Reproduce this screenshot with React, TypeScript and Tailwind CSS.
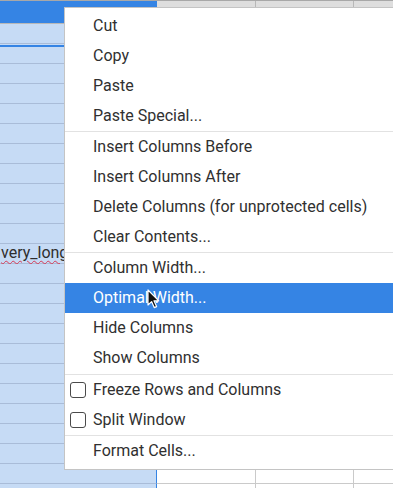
import React from 'react'

const rows = Array.from({ length: 24 }, (_, i) => i + 1)

type Entry =
    | { kind: 'item'; label: string; active?: boolean; check?: boolean }
    | { kind: 'sep'; gap?: boolean }

const menu: Entry[] = [
    { kind: 'item', label: 'Cut' },
    { kind: 'item', label: 'Copy' },
    { kind: 'item', label: 'Paste' },
    { kind: 'item', label: 'Paste Special...' },
    { kind: 'sep' },
    { kind: 'item', label: 'Insert Columns Before' },
    { kind: 'item', label: 'Insert Columns After' },
    { kind: 'item', label: 'Delete Columns (for unprotected cells)' },
    { kind: 'item', label: 'Clear Contents...' },
    { kind: 'sep' },
    { kind: 'item', label: 'Column Width...' },
    { kind: 'item', label: 'Optimal Width...', active: true },
    { kind: 'item', label: 'Hide Columns' },
    { kind: 'item', label: 'Show Columns' },
    { kind: 'sep', gap: true },
    { kind: 'item', label: 'Freeze Rows and Columns', check: true },
    { kind: 'item', label: 'Split Window', check: true },
    { kind: 'sep' },
    { kind: 'item', label: 'Format Cells...' },
]

const Pointer = () => (
    <svg width="14" height="21" viewBox="0 0 14 21" className="absolute left-[147px] top-[289px]">
        <path d="M1 1 L1 16 L4.6 12.6 L7.2 18.6 L9.6 17.6 L7 11.8 L11.8 11.8 Z" fill="#111" stroke="#fff" strokeWidth="1.2" strokeLinejoin="round" />
    </svg>
)

const App: React.FC = () => {
    return (
        <div className="relative w-[393px] h-[488px] overflow-hidden bg-white font-['Roboto',sans-serif]">
            {/* column header */}
            <div className="flex h-[24px] border-t border-b border-t-[#a8a8a8] border-b-[#b8b8b8] text-[13px] leading-[14px] text-[#2e2e2e]">
                <div className="w-[157px] shrink-0 bg-[#3584e4] text-white flex justify-center pt-[4px] border-r border-[#3584e4]">A</div>
                <div className="w-[99px] shrink-0 bg-[#dedede] flex justify-center pt-[4px] border-r border-[#b8b8b8]">B</div>
                <div className="w-[98px] shrink-0 bg-[#dedede] flex justify-center pt-[4px] border-r border-[#b8b8b8]">C</div>
                <div className="w-[99px] shrink-0 bg-[#dedede]" />
            </div>

            {/* grid */}
            {rows.map((r) => (
                <div key={r} className="flex h-[20px]">
                    <div className="relative w-[157px] shrink-0 bg-[#c6dbf5] border-b border-r border-b-[#a9bcd8] border-r-[#3584e4]">
                        {r === 2 && <div className="h-[2px] mt-px bg-[#3584e4]" />}
                        {r === 12 && (
                            <span className="block pl-px leading-[18px] text-[16px] text-[#2e2e2e] underline decoration-wavy decoration-[#d63a55] decoration-1 underline-offset-[2px]">
                                very_long
                            </span>
                        )}
                    </div>
                    <div className="w-[99px] shrink-0 border-b border-r border-[#cacaca]" />
                    <div className="w-[98px] shrink-0 border-b border-r border-[#cacaca]" />
                    <div className="w-[99px] shrink-0 border-b border-[#cacaca]" />
                </div>
            ))}

            {/* context menu */}
            <div className="absolute left-[64px] top-[7px] w-[340px] bg-white border border-[#c4c4c4] pt-[3px] pb-[3px] text-[16px] text-[#303030]">
                {menu.map((m, i) =>
                    m.kind === 'sep' ? (
                        <div key={i} className={`h-px bg-[#e2e2e2] ${m.gap ? 'mt-px' : ''}`} />
                    ) : (
                        <div
                            key={i}
                            className={`flex items-center h-[30px] ${m.active ? 'bg-[#3584e4] text-white' : ''}`}
                        >
                            {m.check ? (
                                <div className="flex items-center">
                                    <span className="ml-[5px] w-[16px] h-[16px] rounded-[3px] border border-[#4a4a4a]" />
                                    <span className="ml-[7px]">{m.label}</span>
                                </div>
                            ) : (
                                <span className="ml-[28px]">{m.label}</span>
                            )}
                        </div>
                    )
                )}
            </div>

            <Pointer />
        </div>
    )
}

export default App
